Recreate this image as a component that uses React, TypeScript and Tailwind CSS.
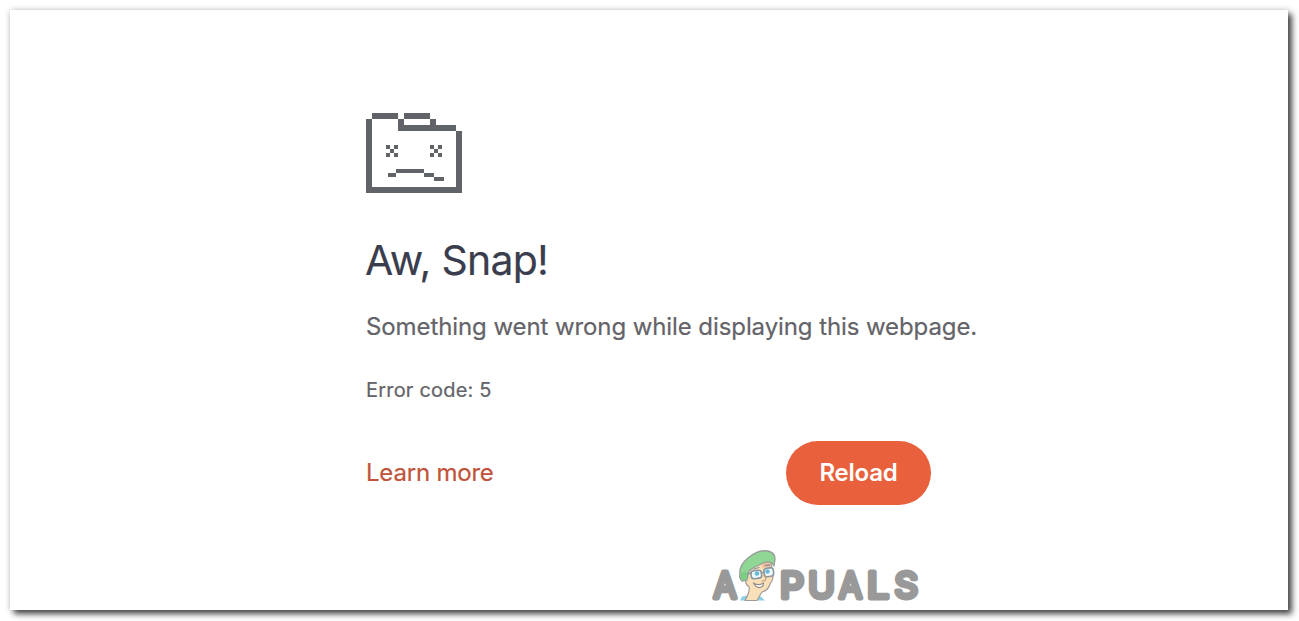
import React from 'react';

export default function App() {
  return (
    <div className="h-[621px] w-full overflow-hidden bg-white p-[10px] font-[Inter,Roboto,sans-serif]">
      <main className="h-[600px] w-[1278px] bg-white pl-[356px] pt-[103px] shadow-[4px_4px_6px_rgba(0,0,0,0.7),0_0_6px_rgba(0,0,0,0.2)]">
        <SadFolder />
        <h1 className="-ml-px mt-[42px] h-[50px] whitespace-nowrap text-[41px] leading-[50px] tracking-[-0.75px] text-[#3a3d4d] [-webkit-text-stroke:0.15px]">
          Aw, Snap!
        </h1>
        <p className="mt-[26px] h-[32px] whitespace-nowrap text-[24px] leading-[32px] tracking-[-0.09px] text-[#636368] [-webkit-text-stroke:0.2px]">
          Something went wrong while displaying this webpage.
        </p>
        <p className="mt-[34px] h-[26px] whitespace-nowrap text-[20px] leading-[26px] tracking-[0.2px] text-[#636368] [-webkit-text-stroke:0.2px]">
          Error code: 5
        </p>
        <div className="mt-[38px] flex w-[565px] items-center justify-between">
          <a href="#" className="whitespace-nowrap text-[24px] leading-[32px] tracking-[-0.2px] text-[#c0533a] [-webkit-text-stroke:0.2px]">
            Learn more
          </a>
          <button className="h-[64px] w-[145px] rounded-full bg-[#e8603c] text-[24px] font-semibold tracking-[-0.2px] text-white">
            Reload
          </button>
        </div>
        <Watermark />
      </main>
    </div>
  );
}

function SadFolder() {
  return (
    <svg width="96" height="80" viewBox="0 0 96 80" shapeRendering="crispEdges" fill="#606368">
      {/* folder outline */}
      <path d="M6 0h26v6H6zM38 0h26v6H38zM32 6h6v6h-6zM64 6h6v6h-6zM32 12h58v6H32zM0 6h6v74H0zM90 18h6v62h-6zM0 74h96v6H0z" />
      {/* eyes */}
      <path d="M20 32h4v4h-4zM28 32h4v4h-4zM24 36h4v4h-4zM20 40h4v4h-4zM28 40h4v4h-4z" />
      <path d="M64 32h4v4h-4zM72 32h4v4h-4zM68 36h4v4h-4zM64 40h4v4h-4zM72 40h4v4h-4z" />
      {/* mouth */}
      <path d="M22 60h8v4h-8zM30 56h28v4H30zM58 60h10v4H58zM68 64h10v4H68z" />
    </svg>
  );
}

function Watermark() {
  return (
    <svg className="ml-[344px] mt-[41px] overflow-visible" width="220" height="72" viewBox="0 0 220 72">
      <g
        fill="#999"
        stroke="#999"
        strokeWidth="4.8"
        strokeLinejoin="round"
        fontFamily="Inter, sans-serif"
        fontWeight="400"
        fontSize="36"
      >
        <text x="3.5" y="51.5" textLength="23" lengthAdjust="spacingAndGlyphs">A</text>
        <text x="70" y="51.5" textLength="24" lengthAdjust="spacingAndGlyphs">P</text>
        <text x="98" y="51.5" textLength="27" lengthAdjust="spacingAndGlyphs">U</text>
        <text x="129" y="51.5" textLength="23" lengthAdjust="spacingAndGlyphs">A</text>
        <text x="157" y="51.5" textLength="22" lengthAdjust="spacingAndGlyphs">L</text>
        <text x="184.5" y="51.5" textLength="23.5" lengthAdjust="spacingAndGlyphs">S</text>
      </g>
      {/* mascot */}
      <g transform="translate(-1 1)" strokeLinecap="round" strokeLinejoin="round">
        <path d="M31 53.5l2-4 5-1 14 1 4 4z" fill="#8dd0ea" />
        <path d="M38 22c5-5 10-7 16-8l8 1 1 8c2 5 1 11-2 14-1 4-4 7-8 8-2 3-3 5-5 8.500H36c3-5 5-9 4-14-3-1-4-5-3-8z" fill="#fae0b9" stroke="#a19b94" strokeWidth="1.2" />
        <path d="M53 15l8-1 1 7c-3-1-6-1-9 0z" fill="#f6c09c" />
        <path d="M33 34c-2-2-3-4-2-6-1-7 3-13 8-17 6-5 14-8 20-7 4 1 7 4 7 8l-1 7c-2-4-6-5-11-3l-10 5-4 3c-1 3-1 6-2 9z" fill="#90d694" stroke="#969c99" strokeWidth="1.3" />
        <path d="M32 26l5-2 1 7-3 3-3-2z" fill="#7bcf82" />
        <rect x="42" y="23.500" width="10.500" height="8" rx="3" transform="rotate(-7 47 27)" fill="#eff8fb" stroke="#8d969d" strokeWidth="1.6" />
        <rect x="55" y="21" width="9.500" height="8.500" rx="3" transform="rotate(-7 60 25)" fill="#eff8fb" stroke="#8d969d" strokeWidth="1.6" />
        <path d="M38 27l4-1M52.500 26l2.500-1M45 22l5-1.500M56 18.500l5-.5" fill="none" stroke="#8d969d" strokeWidth="1.3" />
        <circle cx="48" cy="26.500" r="2.300" fill="#65b9d7" />
        <circle cx="58.500" cy="24.500" r="2.200" fill="#65b9d7" />
        <path d="M55 28c2 2 3 5 0 6h-2" fill="none" stroke="#b79e84" strokeWidth="1.1" />
        <path d="M44.500 36c3 2 7 2 10 0 0 5-6 7-10 0z" fill="#fff" stroke="#918b87" strokeWidth="1.2" />
      </g>
    </svg>
  );
}
